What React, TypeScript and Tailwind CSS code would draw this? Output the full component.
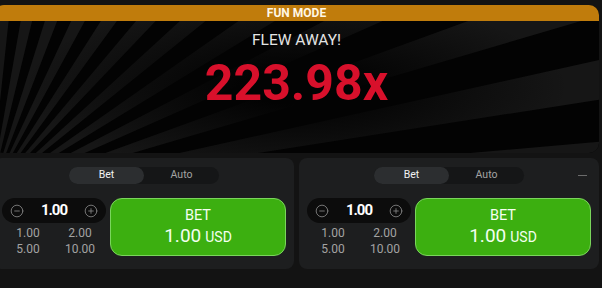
import { CircleMinus, CirclePlus } from "lucide-react";

// Sun-ray wedges behind the round result, fanning out from the lower left.
const RAY_CENTER = { x: -4, y: 190 };
const rays = Array.from({ length: 20 }, (_, i) => {
  const a0 = ((-95 + i * 7.5) * Math.PI) / 180;
  const a1 = ((-95 + i * 7.5 + 3.6) * Math.PI) / 180;
  const r = 900;
  const { x, y } = RAY_CENTER;
  return `${x},${y} ${x + r * Math.cos(a0)},${y + r * Math.sin(a0)} ${x + r * Math.cos(a1)},${y + r * Math.sin(a1)}`;
});

function GameArea() {
  return (
    <div className="relative h-[148px] overflow-hidden rounded-[10px] bg-[#030303]">
      <svg className="absolute inset-0 h-full w-full" viewBox="0 0 605 148" preserveAspectRatio="none">
        {rays.map((pts, i) => (
          <polygon key={i} points={pts} fill="#161616" />
        ))}
      </svg>
      <div className="absolute inset-0 bg-[radial-gradient(ellipse_45%_60%_at_50%_55%,#030303_20%,transparent_100%)]" />
      <div className="relative flex h-[16px] items-center justify-center bg-[#c07c0c] text-[12px] font-bold leading-none text-[#fff7e6]">
        FUN MODE
      </div>
      <div className="relative flex flex-col items-center">
        <div className="mt-[12px] text-[15.5px] leading-none text-[#e4e4e4]">FLEW AWAY!</div>
        <div className="mt-[9px] text-[50px] font-bold leading-none text-[#d8102b]">223.98x</div>
      </div>
    </div>
  );
}

function BetPanel({ showDash }: { showDash?: boolean }) {
  return (
    <div className="h-[111px] w-[300px] rounded-[8px] bg-[#1d1e1f] px-[8px] pt-[9px]">
      <div className="relative flex justify-center">
        <div className="flex h-[17px] w-[150px] rounded-full bg-[#151617] text-[10.5px] leading-none">
          <div className="flex w-[75px] items-center justify-center rounded-full bg-[#2c2e30] text-[#f2f2f2]">Bet</div>
          <div className="flex flex-1 items-center justify-center text-[#a3a3a3]">Auto</div>
        </div>
        {showDash && <div className="absolute right-[4px] top-[8px] h-px w-[9px] bg-[#6b6b6b]" />}
      </div>

      <div className="mt-[14px] flex gap-[4px]">
        <div className="w-[104px]">
          <div className="flex h-[25px] items-center justify-between rounded-full bg-[#0c0c0c] px-[8px]">
            <CircleMinus className="h-[14px] w-[14px] text-[#8a8a8a]" strokeWidth={1.4} />
            <span className="text-[15px] font-bold tracking-[-0.07em] text-white">1.00</span>
            <CirclePlus className="h-[14px] w-[14px] text-[#8a8a8a]" strokeWidth={1.4} />
          </div>
          <div className="mt-[2px] grid grid-cols-2 text-[12px] leading-[16px] text-[#a3a3a3]">
            <div className="text-center">1.00</div>
            <div className="text-center">2.00</div>
            <div className="text-center">5.00</div>
            <div className="text-center">10.00</div>
          </div>
        </div>
        <button className="flex h-[58px] flex-1 flex-col items-center justify-center rounded-[12px] border border-[#7ad55c] bg-[#3caf10] leading-none text-[#f4fff0]">
          <span className="text-[14.5px]">BET</span>
          <span className="mt-[3px] flex items-baseline">
            <span className="text-[19px]">1.00</span>
            <span className="ml-[4px] text-[14px]">USD</span>
          </span>
        </button>
      </div>
    </div>
  );
}

export default function App() {
  return (
    <div className="h-[288px] w-[602px] overflow-hidden bg-[#131313] font-['Roboto',sans-serif]">
      <div className="-ml-[6px] w-[605px] pt-[5px]">
        <GameArea />
        <div className="mt-[5px] flex gap-[5px]">
          <BetPanel />
          <BetPanel showDash />
        </div>
      </div>
    </div>
  );
}
